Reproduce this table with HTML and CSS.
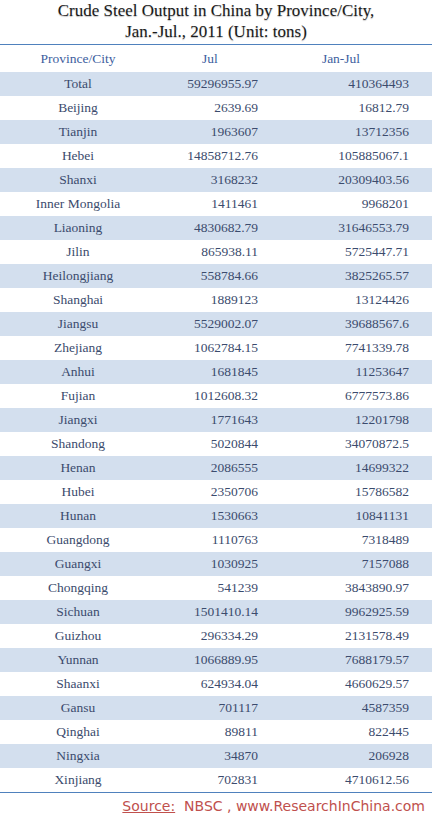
FILE: index.html
```html
<!DOCTYPE html>
<html>
<head>
<meta charset="utf-8">
<link rel="stylesheet" href="styles.css">
</head>
<body>
<div class="page">
  <h1 class="title">Crude Steel Output in China by Province/City,<br>Jan.-Jul., 2011 (Unit: tons)</h1>
  <table class="data">
    <thead>
      <tr><th class="c1">Province/City</th><th class="c2">Jul</th><th class="c3">Jan-Jul</th></tr>
    </thead>
    <tbody>
      <tr class="band"><td class="c1">Total</td><td class="c2">59296955.97</td><td class="c3">410364493</td></tr>
      <tr><td class="c1">Beijing</td><td class="c2">2639.69</td><td class="c3">16812.79</td></tr>
      <tr class="band"><td class="c1">Tianjin</td><td class="c2">1963607</td><td class="c3">13712356</td></tr>
      <tr><td class="c1">Hebei</td><td class="c2">14858712.76</td><td class="c3">105885067.1</td></tr>
      <tr class="band"><td class="c1">Shanxi</td><td class="c2">3168232</td><td class="c3">20309403.56</td></tr>
      <tr><td class="c1">Inner Mongolia</td><td class="c2">1411461</td><td class="c3">9968201</td></tr>
      <tr class="band"><td class="c1">Liaoning</td><td class="c2">4830682.79</td><td class="c3">31646553.79</td></tr>
      <tr><td class="c1">Jilin</td><td class="c2">865938.11</td><td class="c3">5725447.71</td></tr>
      <tr class="band"><td class="c1">Heilongjiang</td><td class="c2">558784.66</td><td class="c3">3825265.57</td></tr>
      <tr><td class="c1">Shanghai</td><td class="c2">1889123</td><td class="c3">13124426</td></tr>
      <tr class="band"><td class="c1">Jiangsu</td><td class="c2">5529002.07</td><td class="c3">39688567.6</td></tr>
      <tr><td class="c1">Zhejiang</td><td class="c2">1062784.15</td><td class="c3">7741339.78</td></tr>
      <tr class="band"><td class="c1">Anhui</td><td class="c2">1681845</td><td class="c3">11253647</td></tr>
      <tr><td class="c1">Fujian</td><td class="c2">1012608.32</td><td class="c3">6777573.86</td></tr>
      <tr class="band"><td class="c1">Jiangxi</td><td class="c2">1771643</td><td class="c3">12201798</td></tr>
      <tr><td class="c1">Shandong</td><td class="c2">5020844</td><td class="c3">34070872.5</td></tr>
      <tr class="band"><td class="c1">Henan</td><td class="c2">2086555</td><td class="c3">14699322</td></tr>
      <tr><td class="c1">Hubei</td><td class="c2">2350706</td><td class="c3">15786582</td></tr>
      <tr class="band"><td class="c1">Hunan</td><td class="c2">1530663</td><td class="c3">10841131</td></tr>
      <tr><td class="c1">Guangdong</td><td class="c2">1110763</td><td class="c3">7318489</td></tr>
      <tr class="band"><td class="c1">Guangxi</td><td class="c2">1030925</td><td class="c3">7157088</td></tr>
      <tr><td class="c1">Chongqing</td><td class="c2">541239</td><td class="c3">3843890.97</td></tr>
      <tr class="band"><td class="c1">Sichuan</td><td class="c2">1501410.14</td><td class="c3">9962925.59</td></tr>
      <tr><td class="c1">Guizhou</td><td class="c2">296334.29</td><td class="c3">2131578.49</td></tr>
      <tr class="band"><td class="c1">Yunnan</td><td class="c2">1066889.95</td><td class="c3">7688179.57</td></tr>
      <tr><td class="c1">Shaanxi</td><td class="c2">624934.04</td><td class="c3">4660629.57</td></tr>
      <tr class="band"><td class="c1">Gansu</td><td class="c2">701117</td><td class="c3">4587359</td></tr>
      <tr><td class="c1">Qinghai</td><td class="c2">89811</td><td class="c3">822445</td></tr>
      <tr class="band"><td class="c1">Ningxia</td><td class="c2">34870</td><td class="c3">206928</td></tr>
      <tr><td class="c1">Xinjiang</td><td class="c2">702831</td><td class="c3">4710612.56</td></tr>
    </tbody>
  </table>
  <p class="source"><span class="src-label">Source:</span>&nbsp; NBSC , www.ResearchInChina.com</p>
</div>
</body>
</html>
```

FILE: styles.css
```css
html, body {
  margin: 0;
  padding: 0;
  background: #ffffff;
}
.page {
  width: 432px;
}
.title {
  margin: 0;
  padding-top: 0;
  height: 44px;
  font-family: "Liberation Serif", serif;
  font-weight: normal;
  font-size: 17px;
  line-height: 21px;
  text-align: center;
  color: #1a1a1a;
  text-shadow: 0 1px 1px rgba(0,0,0,0.25);
}
.data {
  width: 432px;
  border-collapse: collapse;
  table-layout: fixed;
  font-family: "Liberation Serif", serif;
  font-size: 13.5px;
  border-top: 1.5px solid #4f81bd;
  border-bottom: 1.5px solid #4f81bd;
}
.data th {
  font-family: "Liberation Serif", serif;
  font-weight: normal;
  color: #3d5e9e;
  height: 27px;
  padding: 0;
  vertical-align: middle;
}
.data td {
  font-family: "Liberation Serif", serif;
  height: 24px;
  padding: 0;
  color: #3b4b6d;
  vertical-align: middle;
}
.data .c1 { width: 156px; text-align: center; }
.data .c2 { width: 114px; text-align: right; padding-right: 12px; box-sizing: border-box; }
.data .c3 { width: 162px; text-align: right; padding-right: 23px; box-sizing: border-box; }
.data th.c2 { text-align: center; padding-right: 6px; }
.data th.c3 { text-align: center; padding-right: 20px; }
.band td { background: #d3dfee; }
.source {
  margin: 0;
  padding: 5px 7px 0 0;
  text-align: right;
  font-family: "DejaVu Sans", sans-serif;
  font-size: 14px;
  color: #c0504d;
}
.src-label {
  text-decoration: underline;
}
```
